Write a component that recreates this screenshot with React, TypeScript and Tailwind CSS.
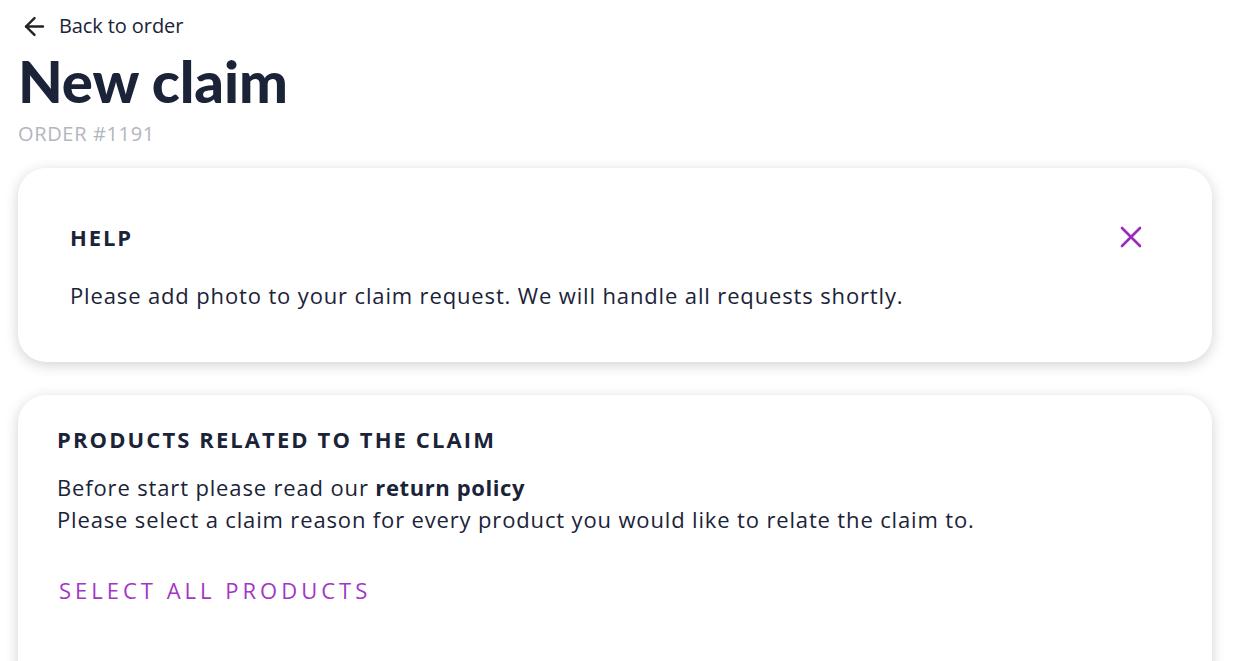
import { ArrowLeft } from "lucide-react"

function CloseIcon() {
  return (
    <svg width="22" height="22" viewBox="0 0 22 22" fill="none" stroke="currentColor" strokeWidth="2.6" strokeLinecap="round">
      <path d="M2 2L20 20M20 2L2 20" />
    </svg>
  )
}

export default function App() {
  return (
    <main className="min-h-screen bg-white pl-[18px] pr-[32px] pt-[11px] font-['Open_Sans',sans-serif] text-[#1b2338]">
      <a href="#" className="flex items-center gap-[10px] pl-[2px] text-[20px] leading-[30px] text-[#1b2338]">
        <ArrowLeft size={29} strokeWidth={2} className="text-[#222]" />
        <span className="tracking-[-0.1px]">Back to order</span>
      </a>

      <h1 className="mt-[8px] font-['Lato',sans-serif] text-[58px] font-black leading-[64px] tracking-[-0.1px]">New claim</h1>
      <p className="mt-[8px] text-[20px] leading-[26px] tracking-[0.65px] text-[#b2b6be]">ORDER #1191</p>

      <section className="mt-[21px] rounded-[28px] bg-white pl-[52px] pr-[70px] pt-[55px] pb-[53px] shadow-[0_3px_14px_rgba(0,0,0,0.18)]">
        <div className="flex h-[28px] items-center justify-between">
          <h2 className="text-[22px] font-bold leading-[28px] tracking-[1.9px]">HELP</h2>
          <span className="text-[#9c2bbd]">
            <CloseIcon />
          </span>
        </div>
        <p className="mt-[30px] text-[22px] leading-[28px] tracking-[0.86px]">
          Please add photo to your claim request. We will handle all requests shortly.
        </p>
      </section>

      <section className="mt-[33px] h-[320px] rounded-[28px] bg-white pl-[39px] pr-[40px] pt-[29px] shadow-[0_3px_14px_rgba(0,0,0,0.18)]">
        <h2 className="text-[22px] font-bold leading-[30px] tracking-[2.1px]">PRODUCTS RELATED TO THE CLAIM</h2>
        <p className="mt-[17px] text-[22px] leading-[32px] tracking-[0.85px]">
          Before start please read our <strong className="font-bold tracking-[0.6px]">return policy</strong>
          <br />
          Please select a claim reason for every product you would like to relate the claim to.
        </p>
        <button className="ml-[2px] mt-[40px] block text-[22px] leading-[30px] tracking-[4px] text-[#a335c4]">SELECT ALL PRODUCTS</button>
      </section>
    </main>
  )
}
